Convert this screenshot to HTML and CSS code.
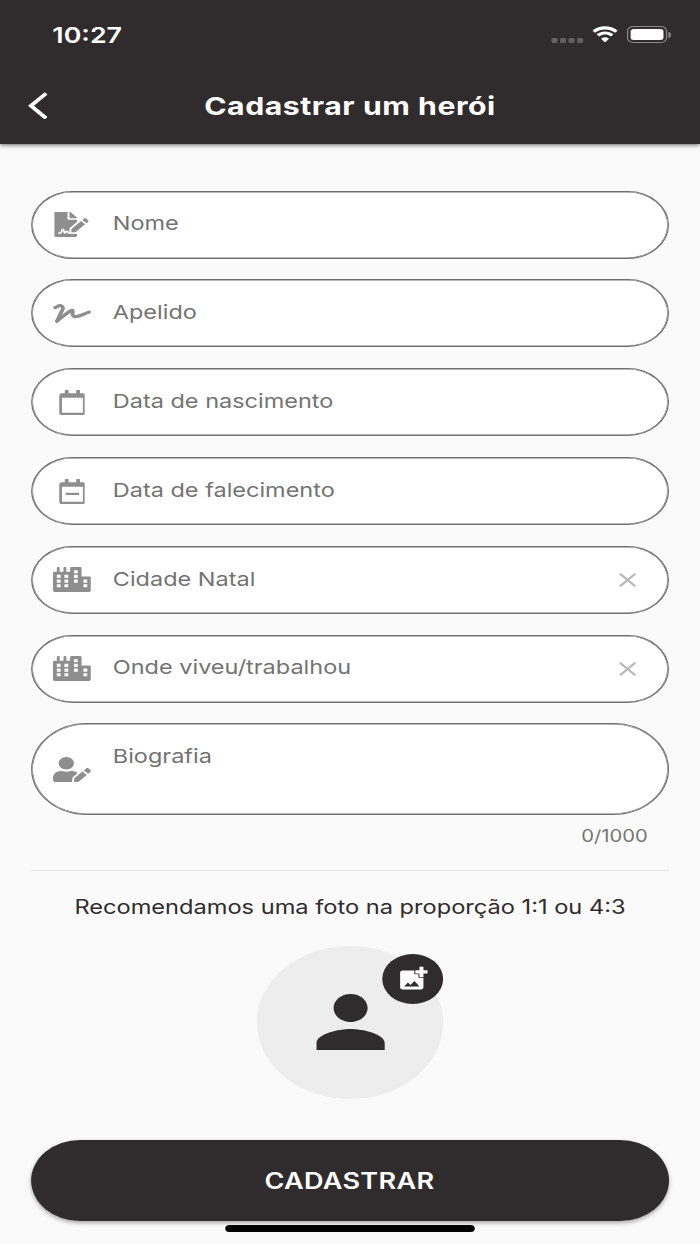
FILE: index.html
```html
<!DOCTYPE html>
<html lang="pt-BR">
<head>
    <meta charset="UTF-8">
    <meta name="viewport" content="width=device-width, initial-scale=1.0">
    <title>Cadastrar um herói</title>
    <link rel="stylesheet" href="styles.css">
</head>
<body>
    <!-- shared icon shapes -->
    <svg class="defs" width="0" height="0">
        <symbol id="city" viewBox="0 0 640 512">
            <path fill-rule="evenodd" d="M616 192H480V24c0-13.3-10.7-24-24-24H312c-13.3 0-24 10.7-24 24v72h-64V16c0-8.8-7.2-16-16-16h-16c-8.8 0-16 7.2-16 16v80h-64V16c0-8.8-7.2-16-16-16H80c-8.8 0-16 7.2-16 16v80H24c-13.3 0-24 10.7-24 24v360c0 17.7 14.3 32 32 32h576c17.7 0 32-14.3 32-32V216c0-13.3-10.7-24-24-24zM64 160h64v64H64zM64 256h64v64H64zM64 352h64v64H64zM192 160h64v64h-64zM192 256h64v64h-64zM192 352h64v64h-64zM352 64h64v64h-64zM352 160h64v64h-64zM352 256h64v64h-64zM512 256h64v64h-64zM512 352h64v64h-64z"/>
        </symbol>
        <symbol id="calendar" viewBox="0 0 448 512">
            <path d="M400 64h-48V12c0-6.6-5.4-12-12-12h-40c-6.6 0-12 5.4-12 12v52H160V12c0-6.6-5.4-12-12-12h-40c-6.6 0-12 5.4-12 12v52H48C21.5 64 0 85.5 0 112v352c0 26.5 21.5 48 48 48h352c26.5 0 48-21.5 48-48V112c0-26.5-21.5-48-48-48zm-6 400H54c-3.3 0-6-2.7-6-6V160h352v298c0 3.3-2.7 6-6 6z"/>
        </symbol>
        <symbol id="close" viewBox="0 0 24 24">
            <path d="M19 6.4L17.6 5 12 10.6 6.4 5 5 6.4l5.6 5.6L5 17.6 6.4 19l5.6-5.6 5.6 5.6 1.4-1.4-5.6-5.6z"/>
        </symbol>
    </svg>

    <div class="screen">
        <header class="header">
            <div class="status-bar">
                <span class="time">10:27</span>
                <div class="status-icons">
                    <div class="signal"><i></i><i></i><i></i><i></i></div>
                    <svg class="wifi" viewBox="0 0 22 16.5">
                        <path d="M11 3.4c3 0 5.8 1.2 7.9 3.2.2.2.4.2.6 0L21 5c.2-.2.2-.5 0-.7C18.3 1.7 14.8.2 11 .2S3.700 1.700 1 4.300c-.2.2-.2.5 0 .7l1.500 1.600c.2.2.4.2.6 0C5.200 4.600 8 3.400 11 3.400z"/>
                        <path d="M11 8.600c1.700 0 3.200.6 4.400 1.700.2.200.4.200.6 0l1.600-1.600c.2-.2.200-.5 0-.7-1.800-1.600-4.100-2.600-6.600-2.600S6.200 6.400 4.400 8c-.2.2-.2.5 0 .7L6 10.300c.2.2.4.2.6 0 1.200-1.100 2.700-1.700 4.400-1.700z"/>
                        <path d="M14.100 13.100c.2-.2.2-.5 0-.7-1.800-1.500-4.400-1.500-6.200 0-.2.2-.2.5 0 .7l2.700 2.800c.2.2.6.2.8 0z"/>
                    </svg>
                    <div class="battery"><div class="level"></div></div>
                    <div class="battery-tip"></div>
                </div>
            </div>
            <div class="title-bar">
                <svg class="back" viewBox="0 2 12 20"><path d="M11.670 3.870L9.900 2.100 0 12l9.900 9.900 1.770-1.770L3.540 12z"/></svg>
                <h1>Cadastrar um herói</h1>
            </div>
        </header>

        <main class="form">
            <div class="field">
                <div class="icon">
                    <svg viewBox="0 0 576 512"><path d="M218.170 424.140c-2.950-5.920-8.090-6.520-10.170-6.520s-7.220.59-10.020 6.190l-7.670 15.340c-6.370 12.780-25.030 11.370-29.480-2.090L144 386.590l-10.610 31.880c-5.890 17.660-22.380 29.530-41 29.530H80c-8.840 0-16-7.160-16-16s7.160-16 16-16h12.390c4.830 0 9.110-3.080 10.640-7.660l18.190-54.640c3.300-9.810 12.440-16.410 22.780-16.410s19.480 6.590 22.770 16.410l13.880 41.640c19.750-16.190 54.060-9.700 66 14.160 1.890 3.780 5.490 5.950 9.360 6.260v-82.120l128-127.090V160H248c-13.200 0-24-10.800-24-24V0H24C10.700 0 0 10.700 0 24v464c0 13.300 10.700 24 24 24h336c13.300 0 24-10.700 24-24v-40l-128-.11c-16.120-.31-30.580-9.280-37.830-23.750zM384 121.900c0-6.300-2.500-12.400-7-16.900L279.100 7c-4.500-4.500-10.600-7-17-7H256v128h128v-6.100zm-96 225.060V416h68.990l161.680-162.780-67.880-67.880L288 346.960zm280.540-179.630l-31.870-31.870c-9.940-9.940-26.070-9.940-36.010 0l-27.250 27.250 67.880 67.880 27.250-27.250c9.950-9.940 9.950-26.070 0-36.010z"/></svg>
                </div>
                <span class="label">Nome</span>
            </div>

            <div class="field">
                <div class="icon">
                    <svg viewBox="0 0 640 512"><path d="M623.200 192c-51.800 3.500-125.700 54.700-163.100 71.500-29.100 13.100-54.200 24.400-76.100 24.400-22.600 0-26-16.200-21.300-51.900 1.100-8 11.700-79.200-42.700-76.100-25.100 1.500-64.300 24.800-169.500 126L192 182.200c30.400-75.900-53.200-151.500-129.700-102.800L7.400 116.300C0 121-2.200 130.900 2.500 138.400l17.200 27c4.700 7.500 14.600 9.700 22.100 4.900l58-38.900c18.400-11.700 40.700 7.200 32.700 27.100L34.300 404.100C27.500 421 37 448 64 448c8.300 0 16.500-3.200 22.600-9.400 42.200-42.200 154.700-150.700 211.200-195.800-2.200 28.500-2.100 58.900 20.600 83.800 15.300 16.800 37.300 25.300 65.500 25.300 35.600 0 68-14.600 102.300-30 33-14.800 99-62.600 138.400-65.800 8.500-.7 15.200-7.300 15.200-15.800v-32.100c.2-9.100-7.500-16.800-16.600-16.100z"/></svg>
                </div>
                <span class="label">Apelido</span>
            </div>

            <div class="field">
                <div class="icon">
                    <svg viewBox="0 0 448 512"><use href="#calendar"/></svg>
                </div>
                <span class="label">Data de nascimento</span>
            </div>

            <div class="field">
                <div class="icon">
                    <svg viewBox="0 0 448 512"><use href="#calendar"/><path d="M124 328c-6.600 0-12-5.400-12-12v-24c0-6.600 5.400-12 12-12h200c6.600 0 12 5.400 12 12v24c0 6.600-5.400 12-12 12H124z"/></svg>
                </div>
                <span class="label">Data de falecimento</span>
            </div>

            <div class="field">
                <div class="icon">
                    <svg viewBox="0 0 640 512"><use href="#city"/></svg>
                </div>
                <span class="label">Cidade Natal</span>
                <div class="icon clear"><svg viewBox="0 0 24 24"><use href="#close"/></svg></div>
            </div>

            <div class="field">
                <div class="icon">
                    <svg viewBox="0 0 640 512"><use href="#city"/></svg>
                </div>
                <span class="label">Onde viveu/trabalhou</span>
                <div class="icon clear"><svg viewBox="0 0 24 24"><use href="#close"/></svg></div>
            </div>

            <div class="field bio">
                <div class="icon">
                    <svg viewBox="0 0 640 512"><path d="M224 256c70.700 0 128-57.300 128-128S294.700 0 224 0 96 57.300 96 128s57.300 128 128 128zm89.600 32h-16.700c-22.200 10.200-46.900 16-72.900 16s-50.600-5.800-72.900-16h-16.700C60.200 288 0 348.200 0 422.400V464c0 26.500 21.500 48 48 48h274.900c-2.400-6.800-3.400-14-2.600-21.300l6.800-60.900 1.200-11.100 7.900-7.900 77.300-77.300c-24.500-27.700-60-45.500-99.900-45.500zm45.300 145.300l-6.800 61c-1.100 10.200 7.500 18.800 17.600 17.600l60.900-6.800 137.900-137.900-71.700-71.700-137.900 137.800zM633 268.900L595.100 231c-9.300-9.300-24.500-9.300-33.800 0l-37.800 37.800-4.100 4.100 71.800 71.700 41.800-41.800c9.300-9.400 9.300-24.500 0-33.900z"/></svg>
                </div>
                <span class="label">Biografia</span>
            </div>
            <div class="counter">0/1000</div>

            <hr>

            <p class="hint">Recomendamos uma foto na proporção 1:1 ou 4:3</p>

            <div class="photo">
                <svg class="person" viewBox="0 0 24 24"><path d="M12 12c2.210 0 4-1.790 4-4s-1.790-4-4-4-4 1.790-4 4 1.790 4 4 4zm0 2c-2.670 0-8 1.340-8 4v2h16v-2c0-2.660-5.330-4-8-4z"/></svg>
                <div class="add-photo">
                    <svg viewBox="0 0 24 24">
                        <rect x="2.300" y="4.700" width="16.400" height="16.300" rx="1.800"/>
                        <path class="cut" d="M5.100 18.500l2.700-3.400 1.800 2 2.800-3.300 3.500 4.700z"/>
                        <path class="plus" d="M15.900 1.600h2.800v2.900h2.900v2.800h-2.900v2.900h-2.800V7.300H13V4.500h2.900z"/>
                    </svg>
                </div>
            </div>

            <button class="submit">CADASTRAR</button>
        </main>
        <div class="home-bar"></div>
    </div>
</body>
</html>
```

FILE: styles.css
```css
* {
    box-sizing: border-box;
}
body {
    margin: 0;
    background-color: #fafafa;
    font-family: Inter, "Liberation Sans", sans-serif;
    overflow: hidden;
}
.defs {
    display: none;
}
/* the phone screen is 575 wide, widened to fill the window */
.screen {
    display: flex;
    flex-direction: column;
    width: 575px;
    height: 1244px;
    transform: scaleX(1.2174);
    transform-origin: 0 0;
}
.header {
    height: 144px;
    background-color: #302b2c;
    color: white;
    box-shadow: 0 1px 4px rgba(0, 0, 0, 0.6);
}
.status-bar {
    display: flex;
    justify-content: space-between;
    align-items: center;
    height: 69px;
    padding: 0 24px 0 43px;
}
.time {
    font-size: 22px;
    font-weight: 600;
}
.status-icons {
    display: flex;
    align-items: center;
}
.signal {
    display: flex;
    gap: 2px;
    margin: 11px 6.5px 0 0;
}
.signal i {
    width: 5px;
    height: 5px;
    border-radius: 1.5px;
    background-color: #656162;
}
.wifi {
    width: 22px;
    height: 16.5px;
    margin-right: 7px;
    fill: white;
}
.battery {
    width: 33.5px;
    height: 17.5px;
    padding: 2px;
    border: 1px solid #8b8889;
    border-radius: 5px;
}
.level {
    height: 100%;
    border-radius: 2.5px;
    background-color: white;
}
.battery-tip {
    width: 2px;
    height: 6px;
    margin-left: 1px;
    border-radius: 0 3px 3px 0;
    background-color: #8b8889;
}
.title-bar {
    display: grid;
    grid-template-columns: 60px 1fr 60px;
    align-items: center;
    height: 73px;
}
.back {
    width: 16.6px;
    height: 27.7px;
    margin-left: 22.5px;
    fill: white;
}
h1 {
    margin: 0;
    font-size: 24.8px;
    font-weight: 700;
    letter-spacing: 0.45px;
    text-align: center;
}
.form {
    display: flex;
    flex-direction: column;
    padding: 46.7px 25.5px 0;
}
.field, .submit, hr {
    transform: translateX(-0.45px);
}
.field {
    display: flex;
    align-items: center;
    height: 68px;
    margin-bottom: 20.8px;
    border: 1px solid #707070;
    border-radius: 46px;
    background-color: white;
    box-shadow: inset 0 0 0 0.5px #707070;
}
.icon {
    display: flex;
    justify-content: center;
    width: 66px;
}
.icon svg {
    height: 25px;
    fill: #8e8e8e;
}
.icon.clear svg {
    height: 24px;
    fill: #b9b9b9;
}
.label {
    flex: 1;
    padding: 0 0 2.6px 0.6px;
    color: #737373;
    font-size: 19.3px;
    line-height: 24px;
}
.bio {
    height: 91.5px;
    margin-bottom: 0;
}
.bio .label {
    padding-bottom: 27px;
}
.counter {
    margin: 11px 17.5px 0 0;
    color: #757575;
    font-size: 16.6px;
    line-height: 20px;
    text-align: right;
}
hr {
    width: 100%;
    height: 1px;
    margin: 24px 0 0;
    border: none;
    background-color: #e2e2e2;
}
.hint {
    margin: 24px 0 0;
    color: #302b2c;
    font-size: 19.4px;
    line-height: 24px;
    text-align: center;
    white-space: nowrap;
}
.photo {
    position: relative;
    display: flex;
    justify-content: center;
    align-items: center;
    width: 153.5px;
    height: 153px;
    margin: 27px auto 0;
    border-radius: 50%;
    background-color: #ededed;
}
.person {
    width: 84px;
    height: 84px;
    fill: #302b2c;
}
.add-photo {
    position: absolute;
    top: 8px;
    right: 0;
    display: flex;
    justify-content: center;
    align-items: center;
    width: 50px;
    height: 50px;
    border-radius: 50%;
    background-color: #302b2c;
}
.add-photo svg {
    width: 28px;
    height: 28px;
    margin-left: 1px;
    fill: white;
}
.add-photo .cut {
    fill: #302b2c;
}
.add-photo .plus {
    stroke: #302b2c;
    stroke-width: 1.4px;
    paint-order: stroke;
}
.submit {
    height: 80.5px;
    margin-top: 41.5px;
    padding: 0;
    border: none;
    border-radius: 41px;
    background-color: #302b2c;
    box-shadow: 0 2px 4px rgba(0, 0, 0, 0.35);
    color: white;
    font-family: inherit;
    font-size: 22.2px;
    font-weight: 600;
    letter-spacing: 0.25px;
}
.home-bar {
    width: 205.5px;
    height: 7px;
    margin: 4px auto 0;
    border-radius: 4px;
    background-color: black;
}
```
